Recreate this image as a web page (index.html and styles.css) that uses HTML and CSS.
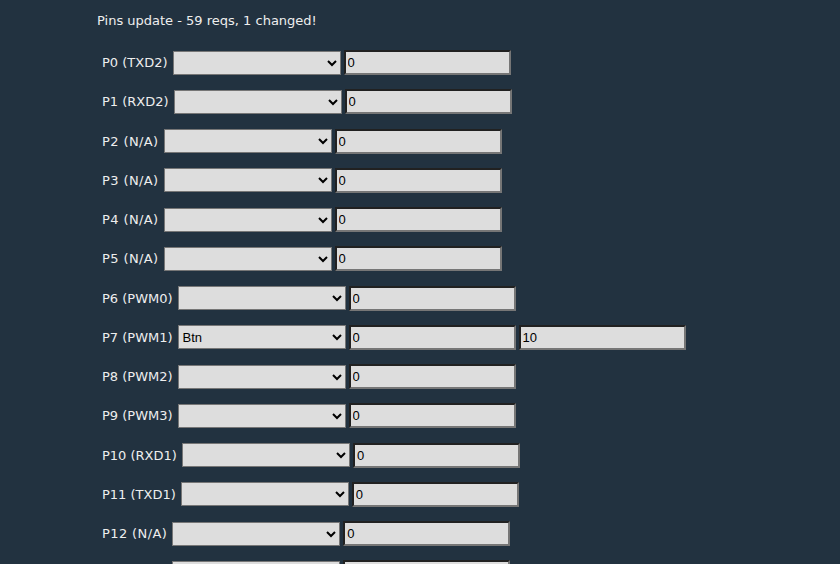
FILE: index.html
```html
<!DOCTYPE html>
<html lang="en">
<head>
    <meta charset="UTF-8">
    <meta name="viewport" content="width=device-width, initial-scale=1">
    <title>Pins</title>
    <link rel="stylesheet" href="styles.css">
</head>
<body>
    <div class="page">
        <p class="status">Pins update - 59 reqs, 1 changed!</p>

        <form class="pins">
            <div class="pin">
                <span class="label">P0 (TXD2)</span>
                <select><option></option></select>
                <input type="text" value="0">
            </div>
            <div class="pin">
                <span class="label">P1 (RXD2)</span>
                <select><option></option></select>
                <input type="text" value="0">
            </div>
            <div class="pin">
                <span class="label na">P2 (N/A)</span>
                <select><option></option></select>
                <input type="text" value="0">
            </div>
            <div class="pin">
                <span class="label na">P3 (N/A)</span>
                <select><option></option></select>
                <input type="text" value="0">
            </div>
            <div class="pin">
                <span class="label na">P4 (N/A)</span>
                <select><option></option></select>
                <input type="text" value="0">
            </div>
            <div class="pin">
                <span class="label na">P5 (N/A)</span>
                <select><option></option></select>
                <input type="text" value="0">
            </div>
            <div class="pin">
                <span class="label">P6 (PWM0)</span>
                <select><option></option></select>
                <input type="text" value="0">
            </div>
            <div class="pin">
                <span class="label">P7 (PWM1)</span>
                <select><option>Btn</option></select>
                <input type="text" value="0">
                <input type="text" value="10">
            </div>
            <div class="pin">
                <span class="label">P8 (PWM2)</span>
                <select><option></option></select>
                <input type="text" value="0">
            </div>
            <div class="pin">
                <span class="label">P9 (PWM3)</span>
                <select><option></option></select>
                <input type="text" value="0">
            </div>
            <div class="pin">
                <span class="label">P10 (RXD1)</span>
                <select><option></option></select>
                <input type="text" value="0">
            </div>
            <div class="pin">
                <span class="label">P11 (TXD1)</span>
                <select><option></option></select>
                <input type="text" value="0">
            </div>
            <div class="pin">
                <span class="label na">P12 (N/A)</span>
                <select><option></option></select>
                <input type="text" value="0">
            </div>
            <div class="pin">
                <span class="label na">P13 (N/A)</span>
                <select><option></option></select>
                <input type="text" value="0">
            </div>
        </form>
    </div>
</body>
</html>
```

FILE: styles.css
```css
body {
    margin: 0;
    background: #223240;
    color: #eee;
    font-family: "DejaVu Sans", Verdana, sans-serif;
    font-size: 13px;
}
.page {
    padding: 13px 0 0 97px;
}
.status {
    margin: 0 0 15px 0;
}
.pins {
    padding-left: 5px;
}
.pin {
    display: flex;
    align-items: center;
    gap: 3px;
    height: 39.25px;
}
.label.na {
    letter-spacing: 0.4px;
}
.pin select {
    width: 168px;
    height: 24px;
    margin-left: 2px;
    background-color: #ddd;
    border: 1px solid #767676;
    color: #000;
    font-family: "Liberation Sans", Arial, sans-serif;
    font-size: 13px;
}
.pin input {
    width: 159px;
    height: 19px;
    padding: 1px 2px;
    background-color: #ddd;
    border: 2px inset #767676;
    color: #000;
    font-family: "Liberation Sans", Arial, sans-serif;
    font-size: 13px;
}
```
